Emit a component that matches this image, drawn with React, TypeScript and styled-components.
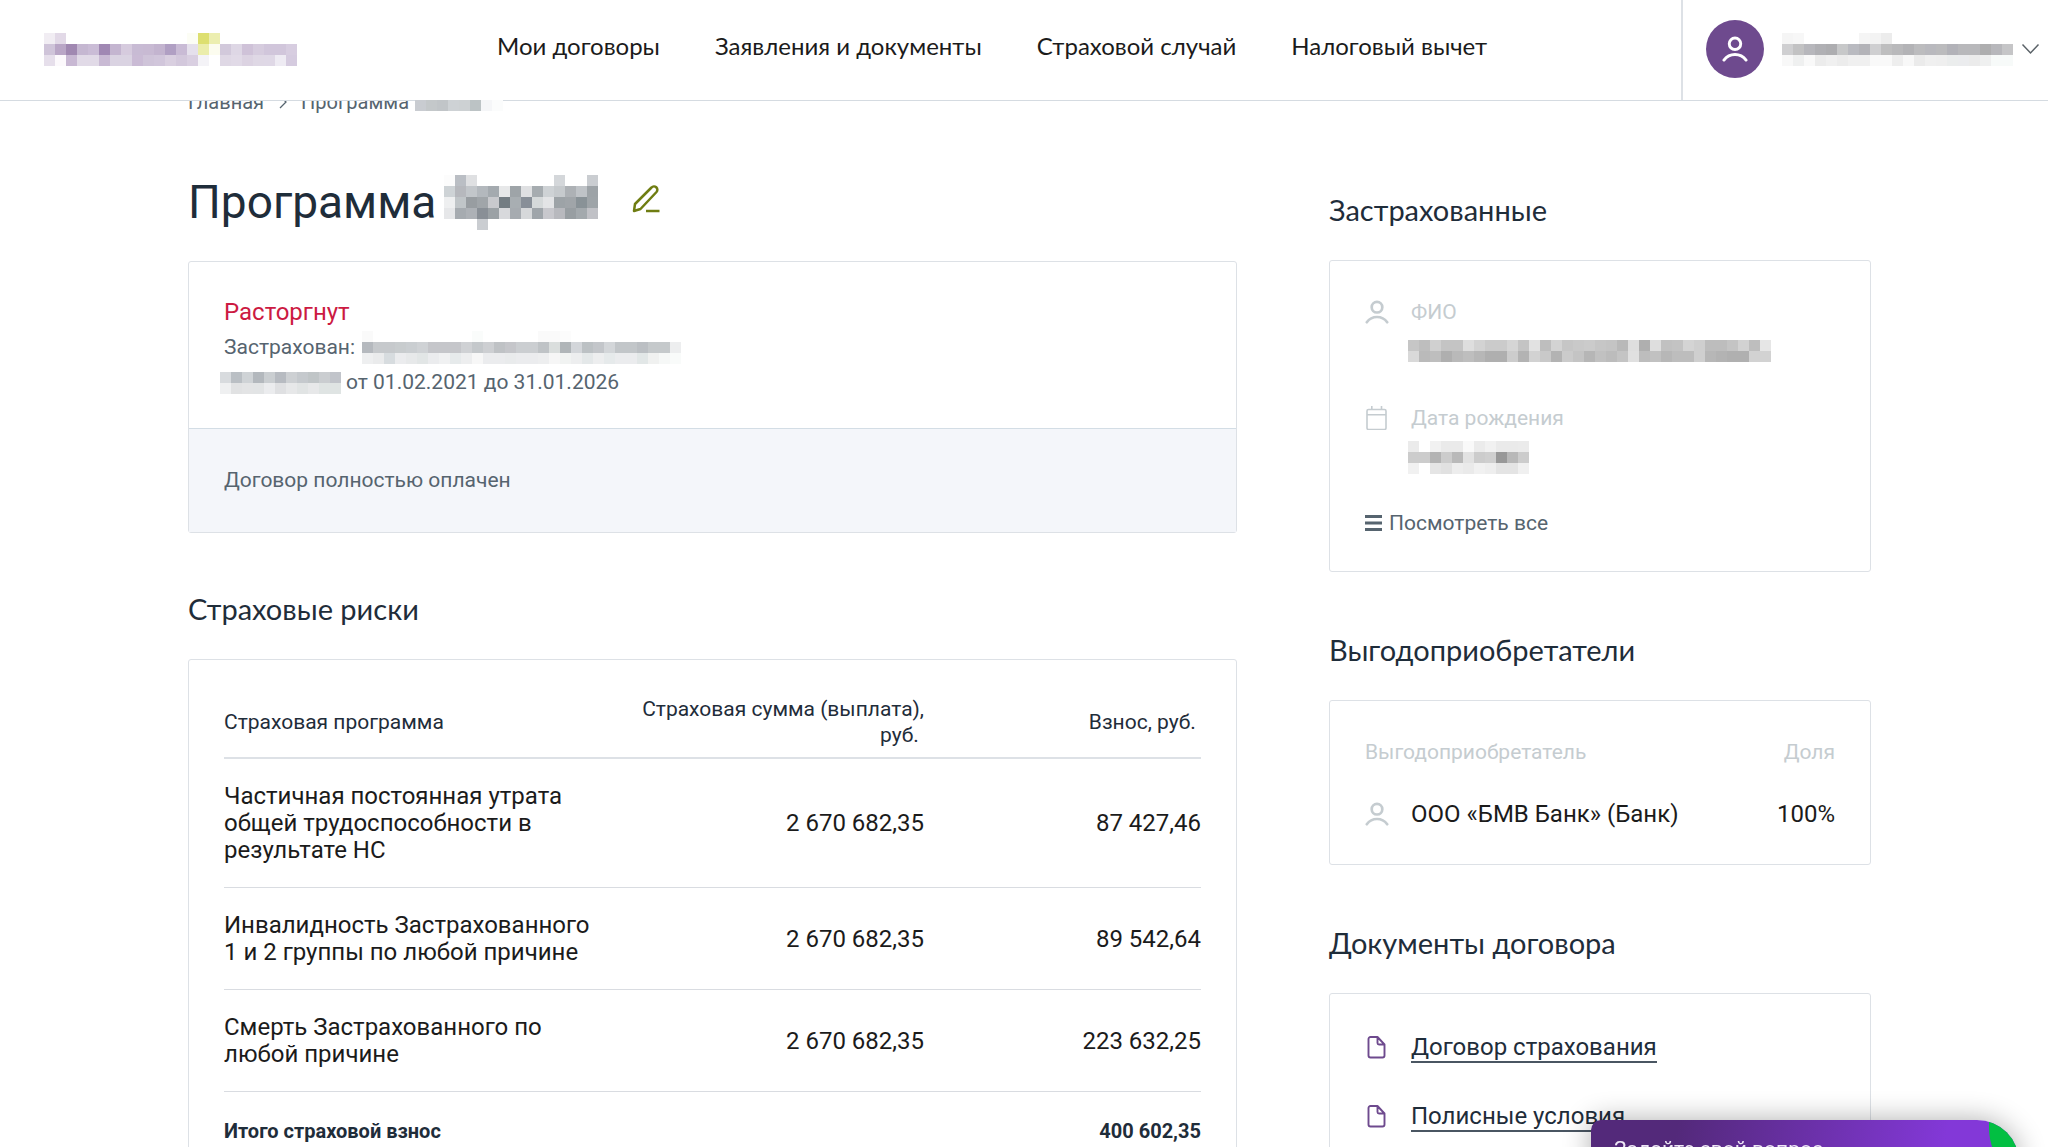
import React from "react";
import styled, { createGlobalStyle } from "styled-components";

const ink = "#1f2d3a";
const muted = "#56646f";
const faint = "#c5ccd0";
const line = "#dde1e6";
const body = `Roboto, "Liberation Sans", sans-serif`;
const display = `Lato, Roboto, sans-serif`;

const GlobalStyle = createGlobalStyle`
  * { box-sizing: border-box; }
  html, body { margin: 0; }
  body {
    background: #fff;
    color: #1b1b1b;
    font-family: ${body};
    font-size: 24px;
    overflow: hidden;
    height: 100vh;
  }
  h1, h2, p, dl, dt, dd, ul, ol { margin: 0; padding: 0; }
  ul, ol { list-style: none; }
  a { color: inherit; text-decoration: none; }
  button { border: 0; background: none; padding: 0; font: inherit; color: inherit; cursor: pointer; }
`;

const CELL = 11;

const MosaicSvg = styled.svg<{ $raised?: boolean }>`
  display: block;
  flex: none;
  position: relative;
  z-index: ${(p) => (p.$raised ? 20 : 0)};
`;

function Mosaic({ rows, label, raised }: { rows: string[]; label: string; raised?: boolean }) {
  const grid = rows.map((r) => r.split(" "));
  const cols = Math.max(...grid.map((r) => r.length));
  return (
    <MosaicSvg
      $raised={raised}
      width={cols * CELL}
      height={grid.length * CELL}
      shapeRendering="crispEdges"
      role="img"
      aria-label={label}
    >
      {grid.flatMap((r, y) =>
        r.map((c, x) =>
          c === "." ? null : (
            <rect key={`${x}-${y}`} x={x * CELL} y={y * CELL} width={CELL} height={CELL} fill={`#${c}`} />
          )
        )
      )}
    </MosaicSvg>
  );
}

const logoRows = [
  "f1edf3 e2d9e7 . . . . . . . . . . . fcfdf5 dddf70 eceeb0 . . . . . . .",
  "cfc4d9 b9a6c6 a088b1 c5b7d1 cabcd6 a088b3 c4b5d0 d6cbde c8bbd4 c8bad3 c3b4cf b09fc3 c9bbd5 e5e0ec ebedab fcfcef d2c9db ded7e5 cfc2d8 d6ccde d1c6db d1c6db d7cde0",
  "e6dfeb fcf9fc c8b8d3 e1dae7 e1dae7 c9bad4 dad3e2 dad3e2 cabbd5 cfc4d9 d1c6db d9cfe0 d3c8dc d9cfe1 f4f3f7 . dfd8e5 e1dae7 dcd3e2 dfd8e5 dfd8e6 eeebf3 d5cbdf",
];
const userRows = [
  "f5f5f5 f7f7f7 . . . . . f5f5f5 f3f3f3 ececec . . . . . . . . . . .",
  "cfcfd1 c2c2c3 b7b7bc b0b0b4 adadb0 c7c8c9 b9bac0 b3b3b8 cfcfd1 bebebf b9b9bb b3b3b6 bcbcbe b9b9be bbbbbd b2b2b8 b8b8bb b8b8bb aeaeaf b7b7bb c5c5c7",
  "f8f8f8 eff0f0 f9f9f9 ececec f0f0f0 ececec f0f0f0 f0f0f0 f9f9f9 f9f9f9 eeeeee f8f8f8 ebebeb f0f0f0 efefef ebeded ebecee ebebeb eff0f0 f7faf9 f7faf9",
];
const crumbRows = ["c9ccd1 c4c8ca c1c5c8 ced2d5 cdd1d3 bcc3c5 f5f6f8 fbfcfc"];
const titleRows = [
  "fcfcfc babec4 dfe0e2 . . . . . . . d4d7da . . cacdd1",
  "ced3d6 b6b8bd c2c6ca b3b8bd a4aaaf e7e8e9 9ea4a8 dfe0e2 a6acb0 ced2d5 c6cacd adb1b5 bfc3c7 9da3a7",
  "eeeff0 c0c5c8 989da1 a0a5a9 c8c9cd 747d83 a8aeb2 888f98 d5d9da e3e4e6 9da3a7 a0a5a9 899297 9ea4a8",
  "e6e7e9 a6abb0 adb1b6 898f96 9ba1a5 d8d9dc a6abb0 d6d8da 9fa5aa c8c8cd b8b9be 989ea2 a3a9ad c0c1c6",
  ". . . cacdd1 . . . . . . . . . .",
];
const nameRows = [
  "fafafa . . . . . . . . . fafcfb . . . . . fafafa fafafa fcfcfc . . . . . . . . . .",
  "b5b9be c6c9cc c6c9cc c8ccce caced1 cfd2d5 c5c6ca c5c6ca c5c6ca cfd1d4 c4c8cb cdcfd2 bfc2c5 c5c6ca cbced1 cbced1 bfc3c6 dadedd b0b5b8 d3d6da bcc1c4 c3c6ca d3d6d9 c2c6c9 c2c6c9 bbbfc3 c5c9cb c5c9cb edeeef",
  "eeeff0 eaebec d7dcdf ebecee e7e9ea e2e6e6 ebecee f0f1f2 e6eaeb edeeef f7f7f7 ebecee ebecee e9ebec ebecee ebecee edeeef f6f6f6 f1f3f2 edeeef e4e8e9 edeeef e6eaeb ebecee ebecee e2e7e7 f0f1f0 f6f8f7 f9fbfa",
];
const numberRows = [
  "d8dbde babfc4 cfd3d6 b3b8bd caced1 b7bbc1 cdd0d3 c5c9cd c0c5c7 cacdd0 c1c4ca",
  "eff0f1 e1e2e3 e3e4e5 e2e4e5 ebecee dfe0e2 e7e8e9 e1e4e4 e7e8e9 dfe4e3 dfe4e3",
];
const fioRows = [
  ". .",
  "c6c6c6 bebebe d0d0d0 c4c4c4 c4c4c4 dedede d3d3d3 cbcbcb cbcbcb d5d5d5 c4c4c4 e2e2e2 bebebe d3d3d3 c6c6c6 c9c9c9 cbcbcb c6c6c6 c4c4c4 b9b9b9 dedede afafaf dedede c1c1c1 c3c3c3 d4d4d4 cfcfcf bdbdbd bdbdbd c4c4c4 d2d2d2 bebebe e6e6e6",
  "d9d9d9 bababa bebebe afafaf b9b9b9 bebebe b7b7b7 afafaf afafaf cccccc b3b3b3 d2d2d2 c9c9c9 b3b3b3 cbcbcb c4c4c4 b6b6b6 c1c1c1 bcbcbc c4c4c4 e0e0e0 bdbdbd c1c1c1 b7b7b7 bdbdbd bdbdbd cfcfcf b7b7b7 b3b3b3 b0b0b0 b0b0b0 d2d2d2 d2d2d2",
  ". .",
];
const birthRows = [
  "ebebeb . f1f1f1 eaeaea eaeaea f9f9f9 ebebeb f1f1f1 eaeaea eaeaea ebebeb",
  "cccccc cccccc b3b3b3 cccccc b9b9b9 e2e2e2 cccccc cfcfcf 989898 b8b8b8 cccccc",
  "f1f1f1 . e5e5e5 e1e1e1 ededed eaeaea f1f1f1 eeeeee e4e4e4 e4e4e4 f0f0f0",
];

/* ---------- header ---------- */

const Header = styled.header`
  position: fixed;
  inset: 0 0 auto 0;
  z-index: 10;
  display: flex;
  align-items: stretch;
  height: 101px;
  background: #fff;
  border-bottom: 1px solid #d5dbe1;
`;
const Logo = styled.a`
  display: flex;
  align-items: center;
  padding: 0 0 2px 44px;
`;
const Nav = styled.nav`
  flex: 1;
  display: flex;
  align-items: center;
  gap: 55px;
  padding: 0 40px 8px 200px;
  font-family: ${display};
  font-size: 24px;
  line-height: 28px;
  white-space: nowrap;
`;
const UserMenu = styled.button`
  display: flex;
  align-items: center;
  padding: 0 8px 2px 23px;
  border-left: 2px solid ${line};
`;
const Avatar = styled.span`
  display: grid;
  place-items: center;
  width: 58px;
  height: 58px;
  margin-right: 18px;
  border-radius: 50%;
  background: #6e4a8e;
  color: #fff;
`;
const Chevron = styled.svg`
  display: block;
  margin-left: 8px;
`;

/* ---------- page frame ---------- */

const Page = styled.main`
  padding: 90px 177px 0 188px;
`;
const Crumbs = styled.ol`
  display: flex;
  align-items: center;
  height: 24px;
  color: ${muted};
  font-size: 20px;
  line-height: 24px;
  & > li { display: flex; align-items: center; }
`;
const CrumbName = styled.li`
  padding: 6px 0 0 6px;
`;
const Columns = styled.div`
  display: grid;
  grid-template-columns: minmax(0, 1fr) 542px;
  column-gap: 92px;
  align-items: start;
  margin-top: 58px;
`;
const Sections = styled.div`
  display: grid;
  gap: 58px;
`;
const Side = styled.aside`
  display: grid;
  gap: 60px;
  padding-top: 20px;
`;
const TitleRow = styled.div`
  display: flex;
  align-items: center;
  height: 60px;
  margin-bottom: 29px;
`;
const Title = styled.h1`
  display: flex;
  align-items: center;
  gap: 8px;
  color: ${ink};
  font-size: 46px;
  line-height: 56px;
  font-weight: 400;
`;
const EditButton = styled.button`
  margin: 0 0 6px 33px;
  color: #6f7d12;
  & > svg { display: block; }
`;
const Heading = styled.h2`
  margin-bottom: 32px;
  color: ${ink};
  font-family: ${display};
  font-size: 29px;
  line-height: 36px;
  font-weight: 400;
`;
const Card = styled.div`
  border: 1px solid ${line};
  border-radius: 3px;
`;
const SideCard = styled(Card)`
  padding: 39px 35px 36px;
`;

/* ---------- contract ---------- */

const Summary = styled.div`
  padding: 33px 35px 28px;
  color: ${muted};
  font-size: 21px;
  line-height: 35px;
`;
const SummaryLine = styled.p`
  display: flex;
  align-items: center;
  gap: 7px;
`;
const Status = styled.p`
  color: #cc1a42;
  font-size: 24px;
`;
const NumberSlot = styled.span`
  margin: 0 -2px 0 -4px;
`;
const Paid = styled.p`
  padding: 34px 35px;
  border-top: 1px solid #d3dde5;
  background: #f4f6fa;
  color: ${muted};
  font-size: 21px;
  line-height: 35px;
`;

const RiskCard = styled(Card)`
  padding: 36px 35px;
`;
const RiskTable = styled.table`
  width: 100%;
  table-layout: fixed;
  border-collapse: separate;
  border-spacing: 0;
  text-align: left;
  th, td { padding: 24px 0 23px; border-bottom: 1px solid #d9dce1; font-weight: 400; vertical-align: middle; line-height: 27px; }
  thead th { padding: 0 0 9px; border-bottom: 2px solid ${line}; color: ${ink}; font-size: 21px; line-height: 26px; }
  tbody th { padding-right: 18px; }
  tfoot th, tfoot td { padding-top: 26px; color: ${ink}; font-size: 20px; font-weight: 700; }
`;
const Col = styled.col<{ $w: string }>`
  width: ${(p) => p.$w};
`;
const NumHead = styled.th`
  text-align: right;
`;
const Num = styled.td`
  text-align: right;
  white-space: nowrap;
`;

/* ---------- side cards ---------- */

const Details = styled.dl`
  display: grid;
  gap: 33px;
  margin-bottom: 32px;
`;
const Detail = styled.div`
  display: grid;
  grid-template-columns: 24px 1fr;
  column-gap: 22px;
  row-gap: 5px;
  & > svg { display: block; color: ${faint}; }
`;
const Term = styled.dt`
  color: ${faint};
  font-size: 21px;
  line-height: 24px;
`;
const Value = styled.dd`
  grid-column: 2;
  display: flex;
  align-items: center;
  height: 44px;
  margin-left: -3px;
`;
const ViewAll = styled.button`
  display: flex;
  align-items: center;
  gap: 7px;
  color: ${muted};
  font-size: 21px;
  line-height: 24px;
`;
const ShareTable = styled.table`
  width: 100%;
  border-collapse: collapse;
  text-align: left;
  th { padding: 0 0 36px; color: ${faint}; font-size: 21px; line-height: 24px; font-weight: 400; }
  td { padding: 0; font-size: 24px; line-height: 28px; }
  th:last-child, td:last-child { text-align: right; }
`;
const Person = styled.span`
  display: flex;
  align-items: center;
  gap: 22px;
  & > svg { flex: none; color: ${faint}; }
`;
const DocList = styled.ul`
  display: grid;
  gap: 39px;
`;
const DocItem = styled.li`
  display: flex;
  align-items: flex-start;
  gap: 22px;
  color: #6e4a8e;
  & > svg { flex: none; margin-top: 2px; }
`;
const DocLink = styled.a`
  border-bottom: 2px solid #4a5662;
  color: ${ink};
  line-height: 28px;
`;

/* ---------- chat ---------- */

const Chat = styled.button`
  position: fixed;
  right: 29px;
  bottom: -23px;
  z-index: 30;
  display: flex;
  width: 428px;
  height: 50px;
  padding: 16px 23px;
  border-radius: 10px 42px 0 0;
  background: linear-gradient(100deg, #53297a 0%, #53297a 20%, #8338d8 82%);
  box-shadow: 0 0 28px rgba(0, 0, 0, 0.32);
  color: #efe8f6;
  font-size: 21px;
  line-height: 26px;
  overflow: hidden;
`;
const Leaf = styled.svg`
  position: absolute;
  top: 0;
  right: 0;
`;

function PersonIcon({ size = 24 }: { size?: number }) {
  return (
    <svg width={size} height={size} viewBox="0 0 24 24" fill="none" stroke="currentColor" strokeWidth="2.7" strokeLinecap="round" aria-hidden>
      <circle cx="12" cy="7.2" r="5.3" />
      <path d="M1.8 22.2C4.2 18.9 7.8 17 12 17s7.800 1.900 10.200 5.200" />
    </svg>
  );
}
function CalendarIcon() {
  return (
    <svg width="24" height="24" viewBox="0 0 24 24" fill="none" stroke="currentColor" strokeWidth="1.600" aria-hidden>
      <rect x="2" y="3.500" width="19" height="20" rx="1.500" />
      <path d="M2 8.700h19M6.800 0v3.500M16.500 0v3.500" />
    </svg>
  );
}
function FileIcon() {
  return (
    <svg width="24" height="24" viewBox="0 0 24 24" fill="none" stroke="currentColor" strokeWidth="1.900" strokeLinejoin="round" aria-hidden>
      <path d="M12.500 2H5.500A2 2 0 0 0 3.500 4v16.500a2 2 0 0 0 2 2h12a2 2 0 0 0 2-2V9.500zM12.500 2v6a1.500 1.500 0 0 0 1.500 1.500h5.500" />
    </svg>
  );
}

const navItems = ["Мои договоры", "Заявления и документы", "Страховой случай", "Налоговый вычет"];
const risks = [
  ["Частичная постоянная утрата общей трудоспособности в результате НС", "2 670 682,35", "87 427,46"],
  ["Инвалидность Застрахованного 1\u00a0и\u00a02 группы по любой причине", "2 670 682,35", "89 542,64"],
  ["Смерть Застрахованного по любой причине", "2 670 682,35", "223 632,25"],
];
const docs = ["Договор страхования", "Полисные условия"];

export default function App() {
  return (
    <>
      <GlobalStyle />
      <Header>
        <Logo href="#" aria-label="На главную">
          <Mosaic rows={logoRows} label="Логотип" />
        </Logo>
        <Nav>
          {navItems.map((t) => (
            <a href="#" key={t}>{t}</a>
          ))}
        </Nav>
        <UserMenu aria-label="Профиль">
          <Avatar><PersonIcon size={26} /></Avatar>
          <Mosaic rows={userRows} label="Имя пользователя" />
          <Chevron width="19" height="12" viewBox="0 0 19 12" fill="none" stroke="#5b6268" strokeWidth="1.500" aria-hidden>
            <path d="M1.500 1.500l8 8.500 8-8.500" />
          </Chevron>
        </UserMenu>
      </Header>

      <Page>
        <Crumbs>
          <li><a href="#">Главная</a></li>
          <li>
            <svg width="37" height="24" viewBox="0 0 37 24" fill="none" stroke={muted} strokeWidth="1.300" aria-hidden>
              <path d="M16 6l6 6-6 6" />
            </svg>
            Программа
          </li>
          <CrumbName><Mosaic rows={crumbRows} label="Название" raised /></CrumbName>
        </Crumbs>

        <Columns>
          <div>
            <TitleRow>
              <Title>
                Программа
                <Mosaic rows={titleRows} label="Название программы" />
              </Title>
              <EditButton aria-label="Переименовать">
                <svg width="30" height="30" viewBox="0 0 30 30" fill="none" stroke="currentColor" strokeWidth="2.500" strokeLinecap="round" strokeLinejoin="round" aria-hidden>
                  <path d="M3 27l1-7L20.500 3.500a3.300 3.300 0 0 1 5 4.500L9.500 25z" />
                  <path d="M15 27h13.500" strokeLinecap="butt" />
                </svg>
              </EditButton>
            </TitleRow>

            <Sections>
              <section>
                <Card>
                  <Summary>
                    <Status>Расторгнут</Status>
                    <SummaryLine>
                      Застрахован: <Mosaic rows={nameRows} label="Имя застрахованного" />
                    </SummaryLine>
                    <SummaryLine>
                      <NumberSlot><Mosaic rows={numberRows} label="Номер договора" /></NumberSlot>
                      от 01.02.2021 до 31.01.2026
                    </SummaryLine>
                  </Summary>
                  <Paid>Договор полностью оплачен</Paid>
                </Card>
              </section>

              <section>
                <Heading>Страховые риски</Heading>
                <RiskCard>
                  <RiskTable>
                    <colgroup>
                      <Col $w="40%" />
                      <Col $w="auto" />
                      <Col $w="277px" />
                    </colgroup>
                    <thead>
                      <tr>
                        <th scope="col">Страховая программа</th>
                        <NumHead scope="col">Страховая сумма (выплата), руб.&nbsp;</NumHead>
                        <NumHead scope="col">Взнос, руб.&nbsp;</NumHead>
                      </tr>
                    </thead>
                    <tbody>
                      {risks.map(([name, sum, fee]) => (
                        <tr key={name}>
                          <th scope="row">{name}</th>
                          <Num>{sum}</Num>
                          <Num>{fee}</Num>
                        </tr>
                      ))}
                    </tbody>
                    <tfoot>
                      <tr>
                        <th scope="row" colSpan={2}>Итого страховой взнос</th>
                        <Num>400 602,35</Num>
                      </tr>
                    </tfoot>
                  </RiskTable>
                </RiskCard>
              </section>
            </Sections>
          </div>

          <Side>
            <section>
              <Heading>Застрахованные</Heading>
              <SideCard>
                <Details>
                  <Detail>
                    <PersonIcon />
                    <Term>ФИО</Term>
                    <Value><Mosaic rows={fioRows} label="ФИО" /></Value>
                  </Detail>
                  <Detail>
                    <CalendarIcon />
                    <Term>Дата рождения</Term>
                    <Value><Mosaic rows={birthRows} label="Дата рождения" /></Value>
                  </Detail>
                </Details>
                <ViewAll>
                  <svg width="17" height="16" viewBox="0 0 17 16" fill="currentColor" aria-hidden>
                    <path d="M0 0h17v3H0zM0 6.500h17v3H0zM0 13h17v3H0z" />
                  </svg>
                  Посмотреть все
                </ViewAll>
              </SideCard>
            </section>

            <section>
              <Heading>Выгодоприобретатели</Heading>
              <SideCard>
                <ShareTable>
                  <thead>
                    <tr>
                      <th scope="col">Выгодоприобретатель</th>
                      <th scope="col">Доля</th>
                    </tr>
                  </thead>
                  <tbody>
                    <tr>
                      <td><Person><PersonIcon />ООО «БМВ Банк» (Банк)</Person></td>
                      <td>100%</td>
                    </tr>
                  </tbody>
                </ShareTable>
              </SideCard>
            </section>

            <section>
              <Heading>Документы договора</Heading>
              <SideCard>
                <DocList>
                  {docs.map((d) => (
                    <DocItem key={d}>
                      <FileIcon />
                      <DocLink href="#">{d}</DocLink>
                    </DocItem>
                  ))}
                </DocList>
              </SideCard>
            </section>
          </Side>
        </Columns>
      </Page>

      <Chat>
        Задайте свой вопрос
        <Leaf width="31" height="50" viewBox="0 0 31 50" aria-hidden>
          <path d="M1 0h30v50H17C7 36 1 24 1 8z" fill="#02bf42" />
        </Leaf>
      </Chat>
    </>
  );
}
